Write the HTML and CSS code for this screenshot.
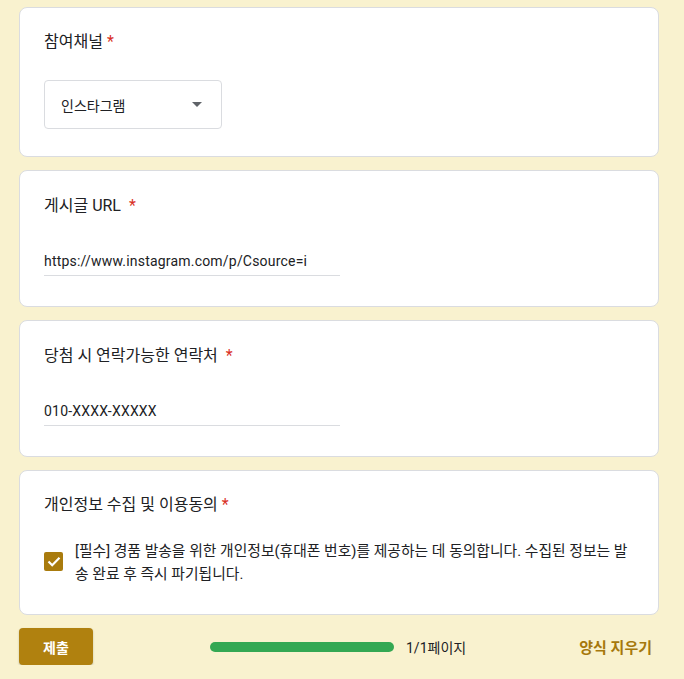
FILE: index.html
```html
<!DOCTYPE html>
<html lang="ko">
<head>
<meta charset="utf-8">
<link rel="stylesheet" href="styles.css">
</head>
<body>
<main class="form">
  <section class="card card-select">
    <div class="q-title">참여채널<span class="req req-tight">*</span></div>
    <div class="select">
      <span class="select-text">인스타그램</span>
      <svg class="caret" width="10" height="5" viewBox="0 0 10 5"><path d="M0 0h10L5 5z" fill="#5f6368"/></svg>
    </div>
  </section>
  <section class="card card-input">
    <div class="q-title">게시글 URL <span class="req">*</span></div>
    <div class="field"><span class="field-text">https://www.instagram.com/p/Csource=i</span></div>
  </section>
  <section class="card card-input">
    <div class="q-title">당첨 시 연락가능한 연락처 <span class="req">*</span></div>
    <div class="field"><span class="field-text">010-XXXX-XXXXX</span></div>
  </section>
  <section class="card card-check">
    <div class="q-title">개인정보 수집 및 이용동의<span class="req req-tight">*</span></div>
    <div class="check-row">
      <span class="checkbox">
        <svg width="14" height="11" viewBox="0 0 14 11"><path d="M1.5 5.5l3.7 3.7L12.5 1.8" fill="none" stroke="#fff" stroke-width="2.2"/></svg>
      </span>
      <p class="check-text">[필수] 경품 발송을 위한 개인정보(휴대폰 번호)를 제공하는 데 동의합니다. 수집된 정보는 발송 완료 후 즉시 파기됩니다.</p>
    </div>
  </section>
  <div class="footer">
    <button class="submit">제출</button>
    <div class="progress">
      <div class="bar"></div>
      <span class="page">1/1페이지</span>
    </div>
    <span class="clear">양식 지우기</span>
  </div>
</main>
</body>
</html>
```
FILE: styles.css
```css
html, body {
  margin: 0;
  padding: 0;
  background: #f9f2cf;
}
body {
  font-family: Roboto, "Noto Sans CJK KR", sans-serif;
  color: #202124;
}
.form {
  width: 640px;
  margin: 0 0 0 19px;
  padding-top: 7px;
  display: flex;
  flex-direction: column;
  gap: 13px;
}
.card {
  background: #fff;
  border: 1px solid #dadce0;
  border-radius: 8px;
  padding: 22px 24px 0 24px;
  box-sizing: border-box;
}
.card-input { padding-top: 23px; }
.card-select { height: 150px; }
.card-input { height: 137px; }
.card-check { height: 145px; }
.q-title {
  font-size: 16px;
  line-height: 24px;
  letter-spacing: 0;
  color: #202124;
}
.req {
  color: #d93025;
  padding-left: 4px;
}
.req-tight { padding-left: 4px; }
.select {
  margin-top: 26px;
  width: 178px;
  height: 49px;
  box-sizing: border-box;
  border: 1px solid #dadce0;
  border-radius: 4px;
  display: flex;
  align-items: center;
  justify-content: space-between;
  padding: 0 19px 0 16px;
  font-size: 14px;
}
.caret { display: block; }
.field {
  margin-top: 33px;
  width: 296px;
  border-bottom: 1px solid #dadce0;
  padding-bottom: 4px;
  font-size: 14px;
  line-height: 20px;
  letter-spacing: 0.2px;
  color: #202124;
}
.check-row {
  margin-top: 23px;
  display: flex;
  align-items: flex-start;
  gap: 12px;
}
.checkbox {
  flex: none;
  width: 19px;
  height: 19px;
  margin-top: 12px;
  border-radius: 2px;
  background: #a97b0d;
  display: flex;
  align-items: center;
  justify-content: center;
}
.check-text {
  margin: 0;
  font-size: 14.8px;
  line-height: 23px;
  color: #202124;
  width: 566px;
  word-break: break-all;
  line-break: anywhere;
}
.footer {
  display: flex;
  align-items: center;
  margin-top: 0;
  height: 37px;
}
.submit {
  width: 74px;
  height: 37px;
  border: none;
  border-radius: 4px;
  background: #b0810f;
  color: #fff;
  font-family: Roboto, "Noto Sans CJK KR", sans-serif;
  font-size: 14px;
  font-weight: 700;
  box-shadow: 0 1px 2px rgba(60,64,67,0.3);
}
.progress {
  display: flex;
  align-items: center;
  margin-left: 117px;
  gap: 12px;
}
.bar {
  width: 184px;
  height: 10px;
  border-radius: 5px;
  background: #34a853;
}
.page {
  font-size: 14px;
  color: #202124;
}
.clear {
  margin-left: auto;
  margin-right: 7px;
  font-size: 15px;
  font-weight: 700;
  color: #a6780c;
}
```
